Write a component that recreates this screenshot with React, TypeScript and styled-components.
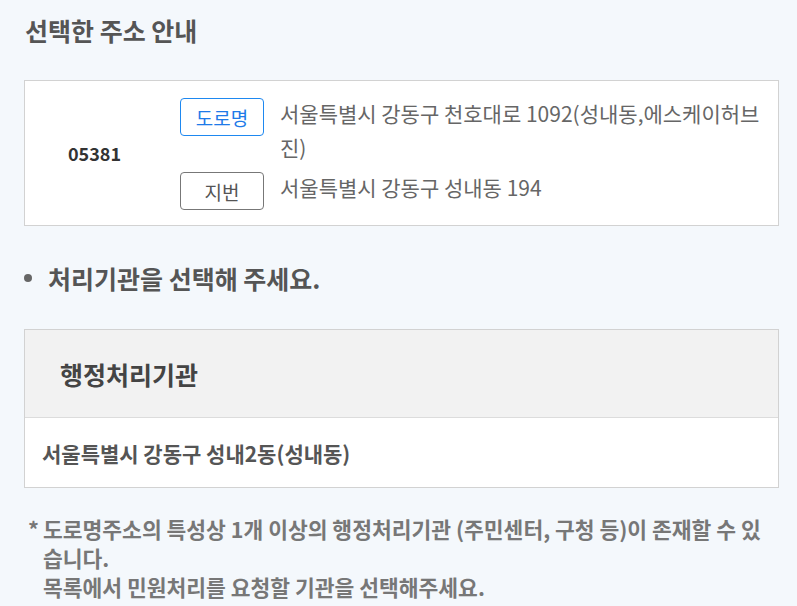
import React from 'react';
import styled, { createGlobalStyle } from 'styled-components';

const GlobalStyle = createGlobalStyle`
    html, body {
        margin: 0;
        padding: 0;
        background: #f4f8fc;
    }
    body {
        font-family: "Noto Sans CJK KR", "Noto Sans", sans-serif;
        color: #555;
    }
`;

interface AddressLine {
    kind: 'road' | 'lot';
    label: string;
    text: string;
}

const addressLines: AddressLine[] = [
    { kind: 'road', label: '도로명', text: '서울특별시 강동구 천호대로 1092(성내동,에스케이허브 진)' },
    { kind: 'lot', label: '지번', text: '서울특별시 강동구 성내동 194' },
];

const App: React.FC = () => {
    return (
        <Page>
            <GlobalStyle />
            <Title>선택한 주소 안내</Title>
            <AddressBox>
                <ZipCode>05381</ZipCode>
                <AddressList>
                    {addressLines.map((line) => (
                        <AddressRow key={line.kind}>
                            <Tag kind={line.kind}>{line.label}</Tag>
                            <AddressText>{line.text}</AddressText>
                        </AddressRow>
                    ))}
                </AddressList>
            </AddressBox>

            <BulletHeading>처리기관을 선택해 주세요.</BulletHeading>

            <OfficeTable>
                <OfficeHeader>행정처리기관</OfficeHeader>
                <OfficeRow>서울특별시 강동구 성내2동(성내동)</OfficeRow>
            </OfficeTable>

            <Note>
                <Star>*</Star>
                <NoteText>
                    도로명주소의 특성상 1개 이상의 행정처리기관 (주민센터, 구청 등)이 존재할 수 있습니다.
                    <br />
                    목록에서 민원처리를 요청할 기관을 선택해주세요.
                </NoteText>
            </Note>
        </Page>
    );
};
export default App;

const Page = styled.div`
    width: 797px;
    min-height: 606px;
    box-sizing: border-box;
    padding: 11px 18px 0 24px;
`;

const Title = styled.h2`
    margin: 0 0 0 1px;
    font-size: 25px;
    font-weight: 700;
    line-height: 38px;
    color: #555;
`;

const AddressBox = styled.div`
    margin-top: 31px;
    display: flex;
    align-items: center;
    background: #fff;
    border: 1px solid #d2d2d2;
    padding: 15px 12px 15px 0;
`;

const ZipCode = styled.div`
    width: 139px;
    flex-shrink: 0;
    text-align: center;
    font-size: 18px;
    font-weight: 700;
    color: #333;
`;

const AddressList = styled.div`
    display: flex;
    flex-direction: column;
    gap: 6px;
    margin-left: 16px;
`;

const AddressRow = styled.div`
    display: flex;
    align-items: flex-start;
    gap: 16px;
`;

const Tag = styled.span<{ kind: 'road' | 'lot' }>`
    flex-shrink: 0;
    width: 84px;
    height: 38px;
    margin-top: 2px;
    box-sizing: border-box;
    display: flex;
    align-items: center;
    justify-content: center;
    border: 1px solid ${props => props.kind === 'road' ? '#1e88f0' : '#777'};
    color: ${props => props.kind === 'road' ? '#1e7ae8' : '#555'};
    border-radius: 4px;
    font-size: 19px;
    background: #fff;
`;

const AddressText = styled.div`
    font-size: 21px;
    line-height: 34px;
    color: #666;
`;

const BulletHeading = styled.h3`
    margin: 35px 0 0 0;
    display: flex;
    align-items: center;
    font-size: 25px;
    font-weight: 700;
    line-height: 34px;
    color: #555;

    &::before {
        content: "";
        width: 8px;
        height: 8px;
        border-radius: 50%;
        background: #666;
        margin: 0 16px 0 0;
    }
`;

const OfficeTable = styled.div`
    margin-top: 34px;
    border: 1px solid #d2d2d2;
    background: #fff;
`;

const OfficeHeader = styled.div`
    height: 88px;
    box-sizing: border-box;
    display: flex;
    align-items: center;
    padding-left: 35px;
    background: #f2f2f2;
    border-bottom: 1px solid #dcdcdc;
    font-size: 25px;
    font-weight: 700;
    color: #444;
`;

const OfficeRow = styled.div`
    height: 69px;
    display: flex;
    align-items: center;
    padding-left: 17px;
    font-size: 21px;
    font-weight: 700;
    color: #555;
`;

const Note = styled.div`
    margin-top: 26px;
    display: flex;
    font-size: 21.5px;
    font-weight: 700;
    line-height: 29px;
    color: #777;
`;

const Star = styled.span`
    width: 15px;
    flex-shrink: 0;
    padding-left: 4px;
`;

const NoteText = styled.div`
    flex: 1;
`;
